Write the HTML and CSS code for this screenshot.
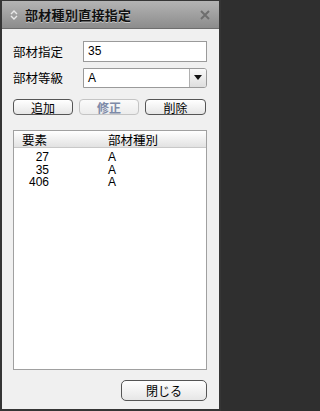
FILE: index.html
```html
<!DOCTYPE html>
<html>
<head>
<meta charset="utf-8">
<link rel="stylesheet" href="styles.css">
</head>
<body>
<div class="window">
  <div class="titlebar">
    <svg class="grip" width="8" height="10" viewBox="0 0 8 10">
      <path d="M1 4 L4 1 L7 4" fill="none" stroke="#e8e8e8" stroke-width="1.4"/>
      <path d="M1 6 L4 9 L7 6" fill="none" stroke="#e8e8e8" stroke-width="1.4"/>
    </svg>
    <span class="title">部材種別直接指定</span>
    <span class="close">
      <svg width="10" height="10" viewBox="0 0 10 10">
        <path d="M1 1 L9 9 M9 1 L1 9" stroke="#6e6e6e" stroke-width="2"/>
      </svg>
    </span>
  </div>
  <div class="content">
    <div class="form-row">
      <span class="label">部材指定</span>
      <div class="field">35</div>
    </div>
    <div class="form-row row2">
      <span class="label">部材等級</span>
      <div class="field select">
        <span class="select-text">A</span>
        <span class="select-btn">
          <svg width="8" height="5" viewBox="0 0 8 5"><path d="M0 0 L8 0 L4 5 Z" fill="#111"/></svg>
        </span>
      </div>
    </div>
    <div class="buttons">
      <div class="btn">追加</div>
      <div class="btn disabled">修正</div>
      <div class="btn">削除</div>
    </div>
    <div class="list">
      <div class="list-head">
        <span class="col1">要素</span>
        <span class="col2">部材種別</span>
      </div>
      <div class="list-row"><span class="num">27</span><span class="col2">A</span></div>
      <div class="list-row"><span class="num">35</span><span class="col2">A</span></div>
      <div class="list-row"><span class="num">406</span><span class="col2">A</span></div>
    </div>
    <div class="footer">
      <div class="btn close-btn">閉じる</div>
    </div>
  </div>
</div>
</body>
</html>
```
FILE: styles.css
```css
html, body {
  margin: 0;
  padding: 0;
  width: 221px;
  height: 411px;
  overflow: hidden;
  background: #2f2f2f;
}
.window {
  box-sizing: border-box;
  width: 221px;
  height: 411px;
  border: 2px solid #353535;
  border-top-width: 1px;
  background: #f0f0f0;
  display: flex;
  flex-direction: column;
  font-family: "Noto Sans CJK JP", "DejaVu Sans", sans-serif;
  font-size: 12px;
  color: #000;
}
.titlebar {
  height: 27px;
  flex: none;
  display: flex;
  align-items: center;
  background: linear-gradient(#b4b4b4, #8c8c8c);
  border-bottom: 1px solid #6e6e6e;
  padding-left: 8px;
}
.grip { flex: none; }
.title {
  margin-left: 7px;
  font-weight: bold;
  font-size: 13px;
  color: #111;
  text-shadow: 0 1px 0 #c8c8c8;
  letter-spacing: 0.3px;
}
.close {
  margin-left: auto;
  margin-right: 9px;
  display: flex;
}
.content {
  flex: 1;
  display: flex;
  flex-direction: column;
  padding: 12px 12px 8px 11px;
}
.form-row {
  display: flex;
  align-items: center;
  height: 21px;
}
.row2 { margin-top: 5px; }
.label {
  width: 70px;
  flex: none;
  font-size: 12.5px;
}
.field {
  box-sizing: border-box;
  width: 124px;
  height: 21px;
  border: 1px solid #9a9a9a;
  background: #fff;
  padding-left: 4px;
  line-height: 18px;
  font-family: "Liberation Sans", "Noto Sans CJK JP", sans-serif;
  font-size: 12px;
}
.select {
  display: flex;
  padding-left: 0;
  height: 20px;
  border-radius: 0 3px 3px 0;
}
.select-text {
  flex: 1;
  padding-left: 4px;
}
.select-btn {
  width: 16px;
  border-left: 1px solid #b0b0b0;
  display: flex;
  align-items: center;
  justify-content: center;
  background: linear-gradient(#fafafa, #dedede);
  border-radius: 0 2px 2px 0;
}
.buttons {
  display: flex;
  gap: 6px;
  margin-top: 11px;
}
.btn {
  box-sizing: border-box;
  width: 60px;
  height: 16px;
  border: 1px solid #555;
  border-radius: 4px;
  background: linear-gradient(#ffffff, #e6e6e6);
  display: flex;
  align-items: center;
  justify-content: center;
  font-size: 12px;
}
.btn.disabled {
  border-color: #c4c4c4;
  color: #7d8aa8;
  font-weight: bold;
  background: linear-gradient(#fbfbfb, #ececec);
}
.buttons .btn:last-child { width: 61px; }
.list {
  margin-top: 15px;
  height: 240px;
  box-sizing: border-box;
  border: 1px solid #a0a0a0;
  background: #fff;
}
.list-head {
  height: 16px;
  display: flex;
  align-items: center;
  background: linear-gradient(#ffffff, #e2e2e2);
  border-bottom: 1px solid #c8c8c8;
  font-size: 12.5px;
}
.col1 {
  width: 93px;
  padding-left: 8px;
  box-sizing: border-box;
}
.col2 { padding-left: 1px; }
.list-row {
  display: flex;
  height: 12.5px;
  line-height: 12px;
  font-family: "Liberation Sans", sans-serif;
  font-size: 12px;
}
.list-head + .list-row { margin-top: 3px; }
.num {
  width: 35px;
  text-align: right;
  box-sizing: border-box;
  margin-right: 58px;
}
.footer {
  display: flex;
  justify-content: flex-end;
  margin-top: 10px;
}
.close-btn {
  width: 86px;
  height: 21px;
  border-radius: 5px;
}
```
